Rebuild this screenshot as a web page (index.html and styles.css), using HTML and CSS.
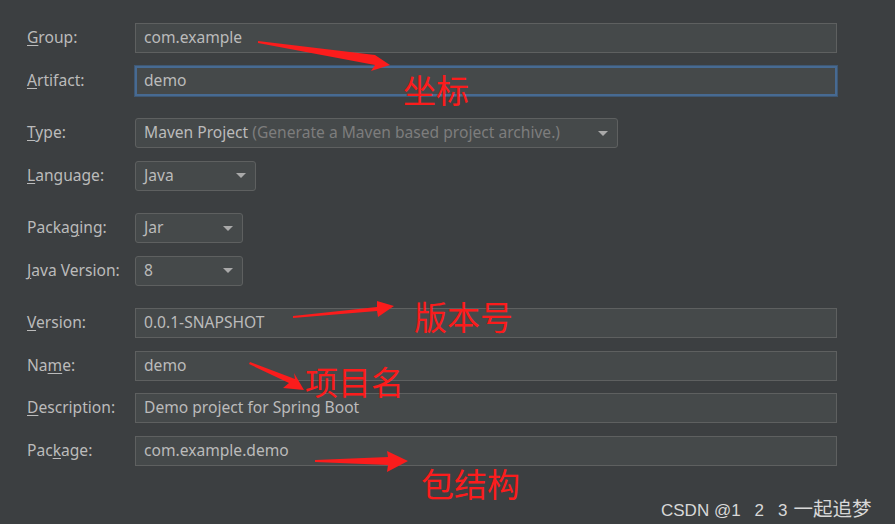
FILE: index.html
```html
<!DOCTYPE html>
<html lang="zh-CN">
<head>
  <meta charset="UTF-8" />
  <title>New Project - Spring Initializr</title>
  <link rel="stylesheet" href="styles.css">
</head>
<body>
  <div class="page">
    <form class="meta">
      <!-- coordinates -->
      <div class="row"><label><u>G</u>roup:</label><div class="field">com.example</div></div>
      <div class="row"><label><u>A</u>rtifact:</label><div class="field focus">demo</div></div>

      <div class="row grp"><label><u>T</u>ype:</label>
        <div class="combo w-type"><span>Maven Project <em>(Generate a Maven based project archive.)</em></span><i class="caret"></i></div></div>
      <div class="row"><label><u>L</u>anguage:</label>
        <div class="combo w-lang"><span>Java</span><i class="caret"></i></div></div>

      <div class="row grp"><label>Packa<u>g</u>ing:</label>
        <div class="combo w-small"><span>Jar</span><i class="caret"></i></div></div>
      <div class="row"><label><u>J</u>ava Version:</label>
        <div class="combo w-small"><span>8</span><i class="caret"></i></div></div>

      <div class="row grp"><label><u>V</u>ersion:</label><div class="field">0.0.1-SNAPSHOT</div></div>
      <div class="row"><label>Na<u>m</u>e:</label><div class="field">demo</div></div>
      <div class="row"><label><u>D</u>escription:</label><div class="field">Demo project for Spring Boot</div></div>
      <div class="row"><label>Pac<u>k</u>age:</label><div class="field">com.example.demo</div></div>
    </form>

    <!-- red annotations drawn over the screenshot -->
    <div class="notes">
      <svg class="arrows" width="895" height="524" viewBox="0 0 895 524">
        <polygon points="258,41 375,55 372,53 390,65 371,71 375,65 258,43"/>
        <polygon points="293,316 377,307 377,301 394,306 378,317 377,311 293,318"/>
        <polygon points="250,362 295,379 294,373 304,390 283,388 289,383 249,364"/>
        <polygon points="315,460 388,457 387,451 408,461 387,472 388,465 315,462"/>
      </svg>
      <span class="note n1">坐标</span>
      <span class="note n2">版本号</span>
      <span class="note n3">项目名</span>
      <span class="note n4">包结构</span>
    </div>

    <div class="mark">CSDN @1<span class="sp">2</span><span class="sp">3</span><span class="cjk">一起追梦</span></div>
  </div>
</body>
</html>
```

FILE: styles.css
```css
:root{--bg:#3c3f41;--input:#45494a;--border:#5e6060;--text:#bbbbbb;--hint:#7d7d7d;--focus:#476a92;--red:#fb1c1c}
*{box-sizing:border-box;margin:0;padding:0}
body{background:var(--bg);font-family:'Noto Sans','Open Sans',sans-serif;font-size:15.6px;color:var(--text);width:895px;height:524px;overflow:hidden}
.page{position:relative;width:895px;height:524px}
/* form */
.meta{display:flex;flex-direction:column;gap:12.5px;padding:23px 0 0 27px}
.row{display:grid;grid-template-columns:108px auto;align-items:center;height:30px}
.row.grp{margin-top:10px}
.row label{white-space:nowrap;padding-bottom:2px}
u{text-underline-offset:2px;text-decoration-thickness:1px}
.field{width:702px;height:30px;background:var(--input);border:1px solid var(--border);padding:0 8px 2px;display:flex;align-items:center;white-space:nowrap}
.field.focus{border:2px solid var(--focus);box-shadow:0 0 0 1px #3f5873;padding-left:7px}
.combo{height:30px;background:var(--input);border:1px solid var(--border);border-radius:3px;padding:0 8px 2px;display:flex;align-items:center;justify-content:space-between;white-space:nowrap}
.combo em{font-style:normal;color:var(--hint)}
.caret{width:0;height:0;border-left:5px solid transparent;border-right:5px solid transparent;border-top:5px solid #a9a9a9;margin:2px 1px 0 0}
.w-type{width:483px}
.w-lang{width:121px}
.w-small{width:108px}
/* annotations */
.notes{position:absolute;inset:0;pointer-events:none}
.arrows{position:absolute;left:0;top:0}
.arrows polygon{fill:var(--red)}
.note{position:absolute;color:var(--red);font-family:'Noto Sans CJK SC',sans-serif;font-size:33px;line-height:1;white-space:nowrap}
.n1{left:403px;top:73px}
.n2{left:414px;top:300px}
.n3{left:305px;top:365px}
.n4{left:421px;top:467px}
.mark{position:absolute;left:661px;top:493px;font-family:'Liberation Sans','Noto Sans CJK SC',sans-serif;font-size:17px;color:#d8d8d8;white-space:nowrap}
.mark .sp{margin-left:14px}
.mark .cjk{font-family:'Noto Sans CJK SC',sans-serif;font-size:19.5px;margin-left:6px}
```
